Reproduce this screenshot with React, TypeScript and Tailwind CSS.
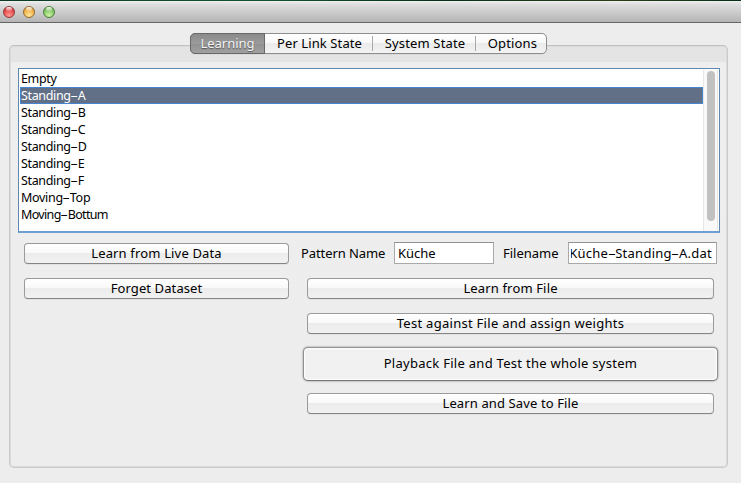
import { Fragment, type ReactNode } from "react";

const patterns = [
  { name: "Empty", cls: "tracking-[-0.35px]" },
  { name: "Standing-A", cls: "tracking-[-0.35px]" },
  { name: "Standing-B", cls: "tracking-[-0.35px]" },
  { name: "Standing-C", cls: "tracking-[-0.35px]" },
  { name: "Standing-D", cls: "tracking-[-0.35px]" },
  { name: "Standing-E", cls: "tracking-[-0.35px]" },
  { name: "Standing-F", cls: "tracking-[-0.35px]" },
  { name: "Moving-Top", cls: "tracking-[-0.3px]" },
  { name: "Moving-Bottum", cls: "tracking-[-0.66px]" },
];

/* Text whose hyphens are drawn as wide dashes. */
function Dashed({ text }: { text: string }) {
  return (
    <>
      {text.split("-").map((part, i) => (
        <Fragment key={i}>
          {i > 0 && (
            <span className="inline-flex w-[7px] justify-center tracking-normal">
              <span className="inline-block scale-x-[1.9]">-</span>
            </span>
          )}
          {part}
        </Fragment>
      ))}
    </>
  );
}

function Light({ cls }: { cls: string }) {
  return (
    <span className={`relative block size-[12px] rounded-full border ${cls}`}>
      <span className="absolute left-[2px] top-0 h-[4px] w-[6px] rounded-full bg-linear-to-b from-white/90 to-white/20" />
    </span>
  );
}

function Button({ children, cls = "" }: { children: ReactNode; cls?: string }) {
  return (
    <button
      className={`flex h-[21px] items-center justify-center rounded-[4px] border border-[#9a9a9a] border-b-[#858585] bg-[linear-gradient(#ffffff_0%,#f9f9f9_45%,#ececec_50%,#f1f1f1_100%)] shadow-[0_1px_0_#e2e2e2] ${cls}`}
    >
      <span className="whitespace-nowrap leading-[17px]">{children}</span>
    </button>
  );
}

export default function App() {
  return (
    <div className="flex h-[483px] w-[741px] flex-col overflow-hidden bg-[#ededed] font-['Noto_Sans','Lucida_Grande',sans-serif] text-[13px] text-black">
      <div className="h-px shrink-0 bg-[linear-gradient(90deg,#0c3a22,#14532f_35%,#06301a_60%,#2b3d17_83%,#053018)]" />
      <header className="flex h-[22px] shrink-0 items-center gap-[8px] border-b border-[#666] bg-[linear-gradient(#f0f0f0,#dedede_15%,#b5b5b5)] pl-[3px]">
        <Light cls="border-[#8f3a38] bg-[radial-gradient(circle_at_50%_85%,#ff9a94,#e5484b_60%,#b93437)]" />
        <Light cls="border-[#94682c] bg-[radial-gradient(circle_at_50%_85%,#ffe79a,#eeb04a_60%,#c18935)]" />
        <Light cls="border-[#4c7d3a] bg-[radial-gradient(circle_at_50%_85%,#cdf5a4,#83c566_60%,#5d9e49)]" />
      </header>

      <nav className="relative z-10 -mb-[9px] ml-[190px] mt-[10px] flex h-[21px] w-[357px] shrink-0 items-center rounded-[5px] border border-[#8d8d8d] bg-[linear-gradient(#ffffff_0%,#f8f8f8_45%,#ebebeb_50%,#f3f3f3_100%)] shadow-[0_1px_0_#dadada]">
        <div className="-my-px -ml-px flex h-[21px] w-[75px] items-center justify-center rounded-l-[5px] border border-[#686868] bg-[linear-gradient(#8b8b8b,#9b9b9b_50%,#929292_55%,#a0a0a0)] text-[#f4f4f4] [text-shadow:0_1px_1px_#555]">
          <span className="tracking-[0px]">Learning</span>
        </div>
        <div className="flex h-[15px] w-[108px] items-center justify-center border-r border-[#aaa] pl-[2px]">
          <span className="tracking-[0.1px]">Per Link State</span>
        </div>
        <div className="flex h-[15px] w-[103px] items-center justify-center border-r border-[#aaa] pl-[2px]">
          <span className="tracking-[0.15px]">System State</span>
        </div>
        <div className="flex h-[15px] flex-1 items-center justify-center pl-[3px]">
          <span className="tracking-[0.15px]">Options</span>
        </div>
      </nav>

      <main className="ml-[9px] h-[423px] w-[719px] shrink-0 rounded-[5px] border border-[#c9c9c9] border-t-[#c0c0c0] bg-[linear-gradient(#e4e4e4_16px,#eeeeee_16px,#ededed)] pl-[8px] pt-[22px] shadow-[inset_0_0_0_1px_#dcdcdc]">
        <section className="flex h-[165px] w-[702px] border border-b-2 border-[#5f88b0] border-b-[#6d9fd0] bg-white pl-px pt-px">
          <ul className="w-[683px] leading-[17px]">
            {patterns.map((p) => (
              <li
                key={p.name}
                className={`flex h-[17px] items-center whitespace-pre border pl-0 text-[12.5px] ${
                  p.name === "Standing-A" ? "border-[#4685ce] bg-[#627087] text-white" : "border-transparent"
                }`}
              >
                <span className={p.cls}>
                  <Dashed text={p.name} />
                </span>
              </li>
            ))}
          </ul>
          <div className="mr-px h-full flex-1 border-x border-[#e6e6e6] bg-[#f9f9f9] pl-[3px] pt-px">
            <div className="h-[150px] w-[8px] rounded-full bg-[#c1c1c1]" />
          </div>
        </section>

        <div className="mt-[9px] flex h-[22px] items-center pl-[6px]">
          <Button cls="w-[265px]">
            <span className="tracking-[0.16px]">Learn from Live Data</span>
          </Button>
          <label className="ml-[12px] w-[93px] whitespace-nowrap pt-px tracking-[-0.08px]">Pattern Name</label>
          <div className="flex h-[22px] w-[100px] items-center border border-[#a9a9a9] border-t-[#929292] bg-white pl-[3px]">
            <span className="pt-px tracking-[0px]">Küche</span>
          </div>
          <label className="ml-[9px] w-[65px] whitespace-nowrap pt-px tracking-[0px]">Filename</label>
          <div className="flex h-[22px] w-[149px] items-center border border-[#a9a9a9] border-t-[#929292] bg-white pl-[2px] pr-[4px]">
            <div className="flex w-full justify-end overflow-hidden whitespace-nowrap pt-px">
              <span className="tracking-[0.27px]">
                <Dashed text="Küche-Standing-A.dat" />
              </span>
            </div>
          </div>
        </div>

        <div className="mt-[14px] flex items-start pl-[6px]">
          <Button cls="w-[265px]">
            <span className="tracking-[0.1px]">Forget Dataset</span>
          </Button>
          <div className="ml-[14px] flex w-[415px] flex-col items-center">
            <Button cls="w-[407px]">
              <span className="tracking-[0.15px]">Learn from File</span>
            </Button>
            <Button cls="mt-[14px] w-[407px]">
              <span className="tracking-[0.28px]">Test against File and assign weights</span>
            </Button>
            <button className="mt-[13px] flex h-[34px] w-[415px] items-center justify-center rounded-[5px] border border-[#929292] border-b-[#777] bg-[#f1f1f1] shadow-[inset_0_0_2px_1px_#fff,0_0_2px_#777]">
              <span className="tracking-[0.28px]">Playback File and Test the whole system</span>
            </button>
            <Button cls="mt-[12px] w-[407px]">
              <span className="tracking-[0.12px]">Learn and Save to File</span>
            </Button>
          </div>
        </div>
      </main>
    </div>
  );
}
